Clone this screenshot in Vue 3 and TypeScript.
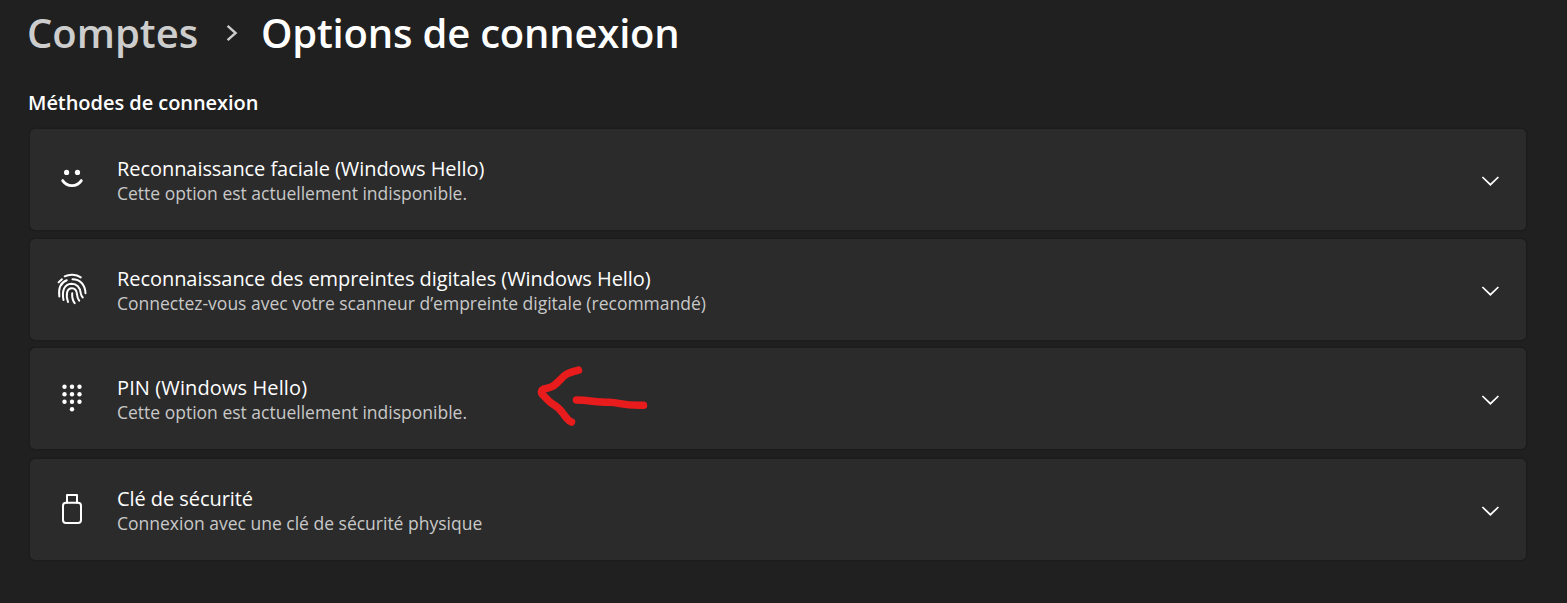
<script setup lang="ts">
interface Method {
  id: 'face' | 'finger' | 'pin' | 'key'
  title: string
  description: string
}

const methods: Method[] = [
  { id: 'face', title: 'Reconnaissance faciale (Windows Hello)', description: 'Cette option est actuellement indisponible.' },
  { id: 'finger', title: 'Reconnaissance des empreintes digitales (Windows Hello)', description: 'Connectez-vous avec votre scanneur d’empreinte digitale (recommandé)' },
  { id: 'pin', title: 'PIN (Windows Hello)', description: 'Cette option est actuellement indisponible.' },
  { id: 'key', title: 'Clé de sécurité', description: 'Connexion avec une clé de sécurité physique' },
]

const dots: [number, number][] = [
  [8.5, 4.7], [16, 4.7], [23.5, 4.7],
  [8.5, 12.2], [16, 12.2], [23.5, 12.2],
  [8.5, 19.7], [16, 19.7], [23.5, 19.7],
  [16, 27.2],
]
</script>

<template>
  <main class="page">
    <h1 class="breadcrumb">
      <span class="parent">Comptes</span>
      <svg class="separator" viewBox="0 0 12 18" width="12" height="18">
        <path d="M1.600 1.800 9.600 9 1.600 16.200" />
      </svg>
      <span class="current">Options de connexion</span>
    </h1>

    <h2 class="section">Méthodes de connexion</h2>

    <div class="list">
      <section v-for="method in methods" :key="method.id" class="card" :class="method.id">
        <svg v-if="method.id === 'face'" class="icon" viewBox="0 0 32 32">
          <circle class="fill" cx="10.600" cy="9.400" r="2.600" />
          <circle class="fill" cx="21.500" cy="9.400" r="2.600" />
          <path class="thick" d="M6.700 17.600c4.600 6.700 14 6.700 18.600 0" />
        </svg>
        <svg v-else-if="method.id === 'finger'" class="icon" viewBox="0 0 32 32">
          <path d="M8.700 3.300C13 1.100 20 .8 24.800 4.400" />
          <path d="M2.600 9.400 5.900 6.200" />
          <path d="M3.300 23.500C2.400 16 4.500 9.500 10.800 7.200" />
          <path d="M16.500 6.200C24 6.200 29.200 11.500 29.500 20.300" />
          <path d="M7.500 27C5.800 18 8 10.900 15.500 10.700c5.700 0 8.600 4.100 9.300 9.700.3 2 .9 3 2 4" />
          <path d="M12 29C9.700 22 10.500 15.300 16 15.300c3.700 0 4.700 3 5 6 .2 2.500.8 4.500 2.200 6.400" />
          <path d="M16.200 20.300c-.3 4 .3 7 2.500 9.900" />
        </svg>
        <svg v-else-if="method.id === 'pin'" class="icon" viewBox="0 0 32 32">
          <circle v-for="([x, y], index) in dots" :key="index" class="fill" :cx="x" :cy="y" r="2.200" />
        </svg>
        <svg v-else class="icon" viewBox="0 0 32 32">
          <rect x="7" y="9.800" width="18" height="20.200" rx="3" />
          <path d="M11 9.800V2h10v7.800" />
        </svg>

        <div class="copy">
          <div class="title"><span>{{ method.title }}</span></div>
          <div class="description"><span>{{ method.description }}</span></div>
        </div>

        <svg class="chevron" viewBox="0 0 18 10" width="18" height="10">
          <path d="M1.400 1 9.400 8.700 17.400 1" />
        </svg>

        <svg v-if="method.id === 'pin'" class="arrow" viewBox="0 0 120 70" width="120" height="70">
          <path d="M48.500 12.200C39 15 36 15 30 22C23 29 21 29.500 16 30.500C10 31.500 10.500 35.500 14 38C18 43 22 46 27 49C31 52 34 57 37 60.500Q39 63 41.500 64" />
          <path d="M46.500 42C59 42 67 44.500 79 44.300C91 44.500 92 48 113.500 47.300" />
        </svg>
      </section>
    </div>
  </main>
</template>

<style>
body {
  margin: 0;
  background: #202020;
}
</style>

<style scoped>
.page {
  box-sizing: border-box;
  height: 603px;
  padding: 7px 41px 0 28px;
  overflow: hidden;
  background: #202020;
  color: #fff;
  font-family: "Open Sans", "Noto Sans", sans-serif;
}

.breadcrumb {
  display: flex;
  height: 52px;
  margin: 0 0 0 -1px;
  font-size: 40px;
  font-weight: 600;
  letter-spacing: -0.2px;
  line-height: 52px;
  white-space: nowrap;
}

.parent {
  width: 199px;
  color: #cdcdcd;
  letter-spacing: 0;
}

.separator {
  width: 12px;
  height: 18px;
  margin: 17px 23px 0 0;
  fill: none;
  stroke: #cdcdcd;
  stroke-width: 2.400;
}

.section {
  height: 28px;
  margin: 30px 0 11px;
  font-size: 20px;
  font-weight: 600;
  letter-spacing: -0.05px;
  line-height: 28px;
}

.list {
  display: grid;
  grid-template-rows: 102px 101px 103px 102px;
  row-gap: 8px;
  margin-left: 2px;
}

.card {
  position: relative;
  display: flex;
  box-sizing: border-box;
  height: 101px;
  margin-top: 1px;
  padding: 0 27px 0 26px;
  border-radius: 5px;
  background: #2b2b2b;
  box-shadow: 0 0 0 1.500px #1c1c1c;
}

.icon {
  width: 32px;
  height: 32px;
  margin: 34px 29px 0 0;
  fill: none;
  stroke: #fff;
  stroke-width: 2;
  stroke-linecap: round;
  stroke-linejoin: round;
}

.icon .fill {
  fill: #fff;
  stroke: none;
}

.icon .thick {
  stroke-width: 2.800;
}

.copy {
  flex: 1;
  padding-top: 26px;
  white-space: nowrap;
}

.title {
  height: 26px;
  font-size: 20px;
  letter-spacing: -0.06px;
  line-height: 28px;
}

.pin .title {
  letter-spacing: 0.11px;
}

.description {
  height: 24px;
  color: #c8c8c8;
  font-size: 17.5px;
  line-height: 24px;
}

.chevron {
  margin-top: 47px;
  fill: none;
  stroke: #fff;
  stroke-width: 1.700;
}

.arrow {
  position: absolute;
  top: 10px;
  left: 500px;
  fill: none;
  stroke: #e81c1c;
  stroke-width: 7.500;
  stroke-linecap: round;
  stroke-linejoin: round;
}
</style>
